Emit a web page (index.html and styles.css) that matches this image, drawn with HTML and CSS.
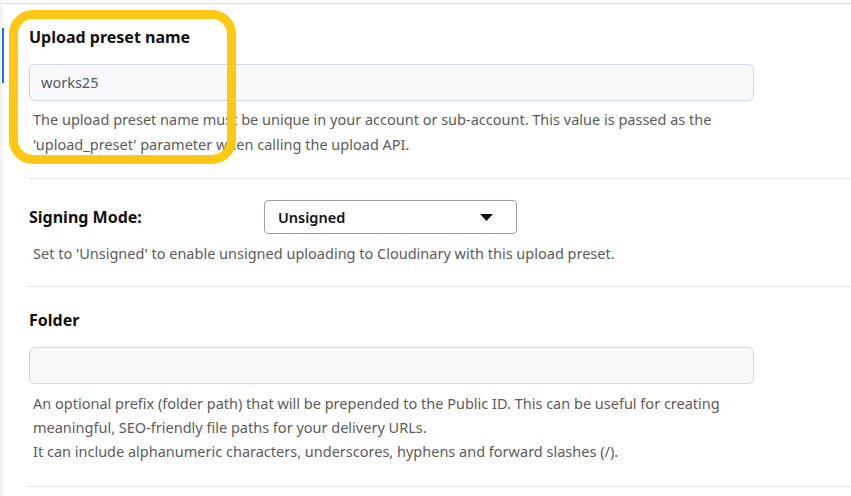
FILE: index.html
```html
<!DOCTYPE html>
<html lang="en">
<head>
  <meta charset="UTF-8">
  <meta name="viewport" content="width=device-width, initial-scale=1.0">
  <title>Upload preset</title>
  <link rel="stylesheet" href="styles.css">
</head>
<body>
  <div class="page">
    <div class="side"></div>
    <div class="main">
      <div class="field first">
        <span class="active-bar"></span>
        <span class="highlight"></span>
        <h3 class="label">Upload preset name</h3>
        <div class="input">works25</div>
        <p class="help">The upload preset name must be unique in your account or sub-account. This value is passed as the<br>'upload_preset' parameter when calling the upload API.</p>
      </div>

      <div class="field row-field">
        <div class="row">
          <h3 class="label">Signing Mode:</h3>
          <div class="select">
            <span>Unsigned</span>
            <svg width="13" height="7" viewBox="0 0 13 7"><path d="M0 0h13L6.5 7z" fill="#111"/></svg>
          </div>
        </div>
        <p class="help">Set to 'Unsigned' to enable unsigned uploading to Cloudinary with this upload preset.</p>
      </div>

      <div class="field">
        <h3 class="label">Folder</h3>
        <div class="input"></div>
        <p class="help narrow">An optional prefix (folder path) that will be prepended to the Public ID. This can be useful for creating<br>meaningful, SEO-friendly file paths for your delivery URLs.<br>It can include alphanumeric characters, underscores, hyphens and forward slashes (/).</p>
      </div>
    </div>
  </div>
</body>
</html>
```

FILE: styles.css
```css
body {
  margin: 0;
  background: #fff;
  color: #111;
  font-family: "Noto Sans", "Open Sans", sans-serif;
  overflow: hidden;
}

.page {
  display: flex;
  height: 496px;
}

.side {
  width: 3px;
  background: #f2f2f2;
}

.main {
  flex: 1;
  border-top: 1px solid #d9d9d9;
  margin-top: 3px;
  padding-left: 26px;
}

.field {
  position: relative;
  border-bottom: 1px solid #e3e3e3;
}

.first {
  padding-top: 21px;
  height: 153px;
}

.active-bar {
  position: absolute;
  left: -27px;
  top: 24px;
  width: 2px;
  height: 55px;
  background: #1a73e8;
}

.highlight {
  position: absolute;
  left: -20px;
  top: 6px;
  width: 209px;
  height: 136px;
  border: 9px solid #ffc814;
  border-radius: 24px;
}

.label {
  margin: 0;
  font-size: 16px;
  font-weight: 700;
  line-height: 24px;
}

.input {
  margin-top: 15px;
  width: 725px;
  height: 37px;
  box-sizing: border-box;
  border: 1px solid #cfd6df;
  border-radius: 6px;
  background: #f8f9fa;
  padding: 0 11px;
  font-size: 14.5px;
  line-height: 35px;
  color: #4f5866;
}

.help {
  margin: 6px 0 0 4px;
  font-size: 14.5px;
  line-height: 25px;
  color: #5b5b5b;
}

.row-field {
  padding-top: 21px;
  height: 86px;
}

.row {
  display: flex;
  align-items: center;
}

.row .label {
  width: 235px;
}

.select {
  width: 253px;
  height: 34px;
  box-sizing: border-box;
  border: 1px solid #9aa0a8;
  border-radius: 4px;
  display: flex;
  align-items: center;
  justify-content: space-between;
  padding: 0 23px 0 13px;
  font-size: 14.5px;
  font-weight: 600;
}

.row-field .help {
  margin-top: 7px;
}

.field:last-child {
  padding-top: 21px;
  height: 178px;
}

.narrow {
  margin-top: 7px;
  line-height: 24px;
}
```
